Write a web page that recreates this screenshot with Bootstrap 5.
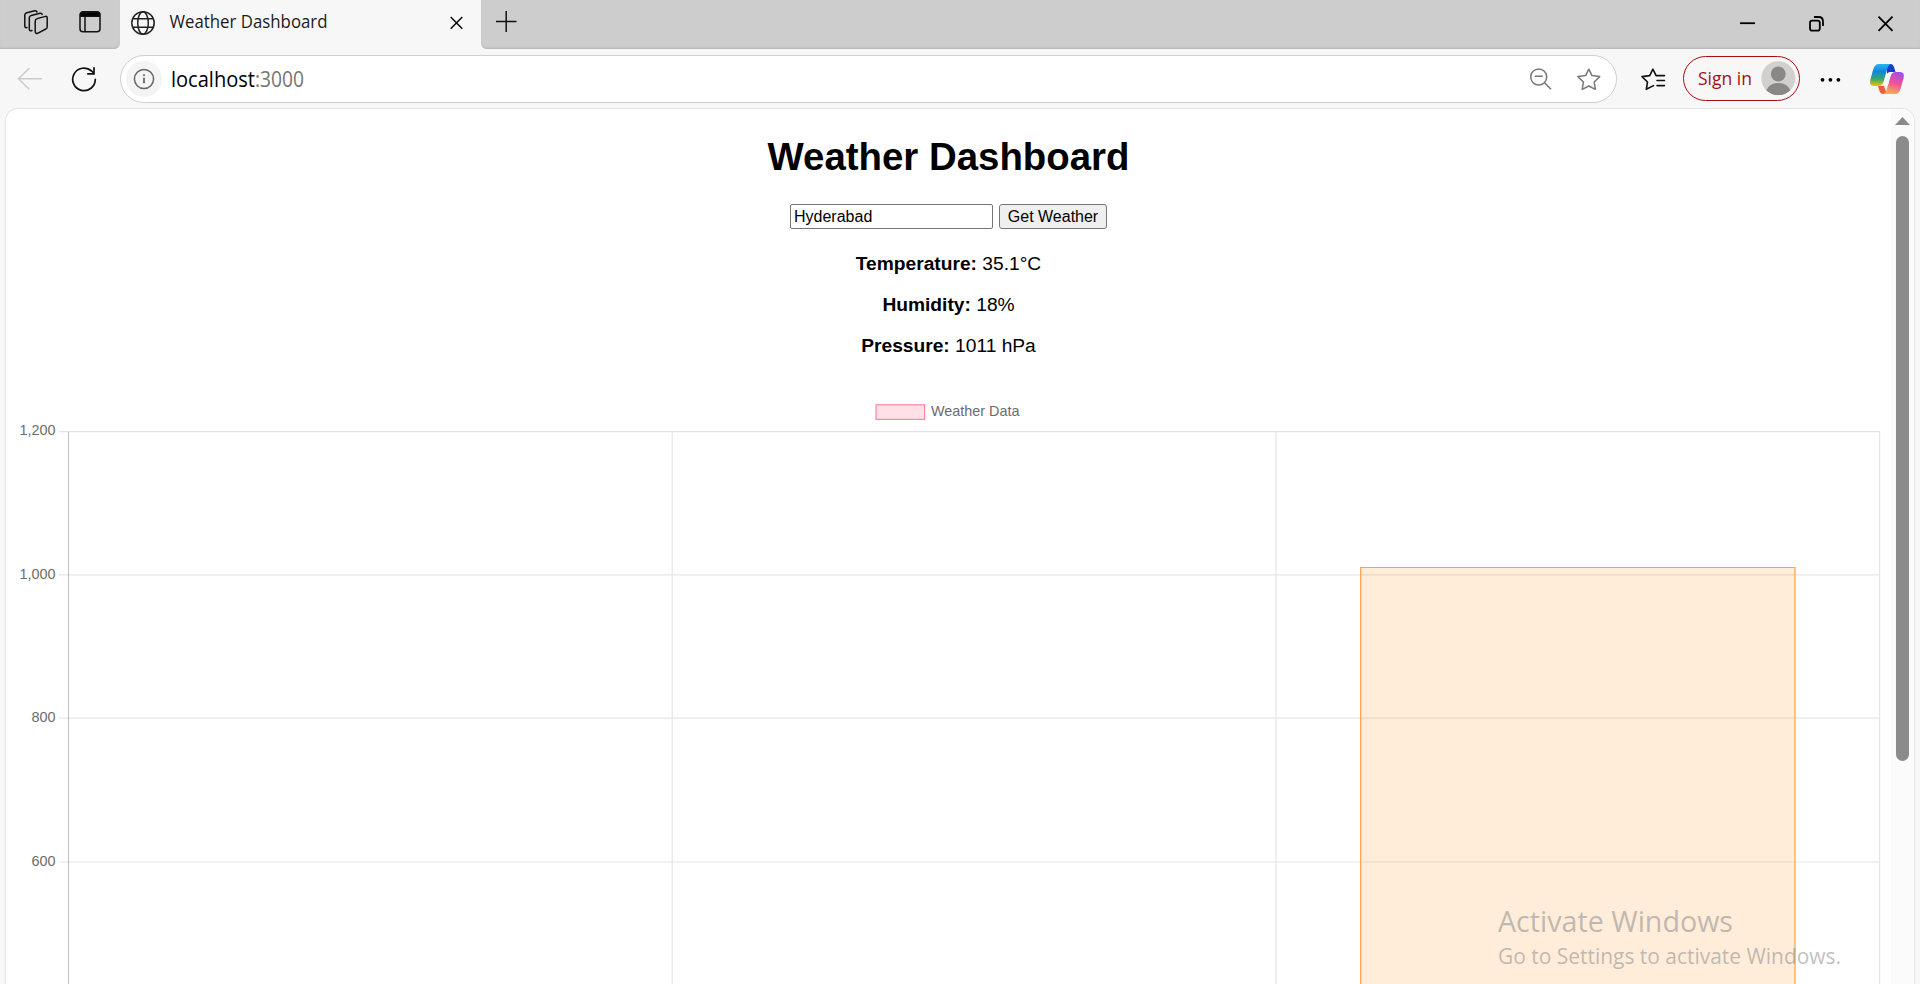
<!DOCTYPE html>
<html lang="en">
<head>
<meta charset="utf-8">
<title>Weather Dashboard</title>
<link href="https://cdn.jsdelivr.net/npm/bootstrap@5.3.0/dist/css/bootstrap.min.css" rel="stylesheet">
<style>
html,body{height:984px;overflow:hidden}
body{background:#f7f7f7;font-family:"Liberation Sans",Arial,sans-serif;color:#000}
svg{display:block;flex:none;overflow:visible}
.ui{font-family:"Open Sans","Noto Sans",sans-serif}
.tabstrip{height:49px;background:#f7f7f7}
.strip-l,.strip-r{background:#cdcdcd;box-shadow:inset 0 -2px 2px -1px #b3b3b3}
.strip-l{width:120px;padding:10px 0 0 24px;gap:31px;border-bottom-right-radius:6px}
.strip-r{border-bottom-left-radius:6px}
.tab-on{width:361px;padding:11px 18px 0 11px}
.toolbar{height:59px}
.pill{margin:6px 0 0 24px;width:1497px;height:48px;border:1.5px solid #cfcfcf;border-radius:24px;background:#fff}
.info-dot{width:36px;height:36px;border-radius:50%;background:#f4f4f4;margin-left:5px}
.signin{width:117px;height:45px;margin:7px 0 0 18px;border:1.5px solid #a80f14;border-radius:23px;padding:0 3px 0 14px}
.viewport{margin:0 5px;height:876px;border:1px solid #e4e4e4;border-bottom:0;border-radius:13px 13px 0 0;background:#fff;overflow:hidden}
.scrolltrack{width:23px;background:#fbfbfb;padding-top:8px}
.thumb{width:13px;height:625px;border-radius:7px;background:#8b8b8b;margin-top:11px}
.page{font-size:19.2px;line-height:22px}
.page h1{font-size:38.4px;font-weight:700;line-height:44px;margin:26px 0 25px}
.page p{margin:0 0 19.2px}
.city{width:203px;height:25px;font:16px "Liberation Sans",Arial,sans-serif;border:1px solid #767676;border-radius:2px;padding:0 3px;color:#000}
.go{width:108px;height:25px;font:16px "Liberation Sans",Arial,sans-serif;border:1px solid #767676;border-radius:3px;padding:0;background:#efefef;color:#000}
.form-line{gap:6px;margin-bottom:24px}
.chart{margin-top:-1px}
.watermark{right:79px;bottom:0}
</style>
<script src="https://cdn.jsdelivr.net/npm/bootstrap@5.3.0/dist/js/bootstrap.bundle.min.js"></script>
</head>
<body>
<header>
<div class="tabstrip d-flex">
  <div class="strip-l d-flex">
    <svg width="24" height="25" fill="none" stroke="#111" stroke-width="1.5" stroke-linejoin="round" stroke-linecap="round"><path d="M13.2 8.6 21.4 6.4Q23.2 6 23.2 7.8V16.8Q23.2 18.3 21.8 19L13.6 23.3Q11.2 24 11.2 21.6V11.2Q11.2 9.2 13.2 8.6Z"/><path d="M8 20.6Q5.3 21.3 5.3 19V7.8Q5.3 6 7.2 5.4L16 3.3Q17.8 3 18.2 4.4"/><path d="M3 17.6Q.8 18 .8 16V5Q.8 3.3 2.8 2.8L10.8.8Q12.6.4 13 2"/></svg>
    <svg width="21" height="23" fill="none" stroke="#111" stroke-width="1.5"><rect x="1" y="1.8" width="20" height="20" rx="3"/><path d="M1.7 4Q1.7 2.5 3.7 2.5H18.2Q20.3 2.5 20.3 4V6.3H1.7Z" fill="#000"/><path d="M6 7V21.5"/></svg>
  </div>
  <div class="tab-on d-flex">
    <svg width="24" height="24" fill="none" stroke="#222" stroke-width="1.5"><circle cx="12" cy="12" r="11.2"/><ellipse cx="12" cy="12" rx="5.3" ry="11.2"/><path d="M2 7.8H22M2 16.2H22"/></svg>
    <svg class="ui ms-3" width="280" height="24"><text x="-1.5" y="17.3" font-size="17.5" fill="#1b1b1b" textLength="158" lengthAdjust="spacingAndGlyphs">Weather Dashboard</text></svg>
    <svg width="13" height="24" stroke="#111" stroke-width="1.6" style="margin-left:-1px"><path d="M.7 6 12.3 17.8M12.3 6 .7 17.8"/></svg>
  </div>
  <div class="strip-r d-flex flex-grow-1 justify-content-between">
    <svg width="21" height="22" class="ms-3 mt-2" stroke="#111" stroke-width="1.5"><path d="M-1 13.5H19.5M9.2 3V24"/></svg>
    <svg width="153" height="16" style="margin:16px 27px 0 0" fill="none" stroke="#000" stroke-width="1.8"><path d="M0 7.2H15"/><rect x="70" y="4.6" width="9.8" height="10" rx="2.2"/><path d="M74 1H78.5Q83 1 83 5.5V10"/><path d="M138.5.6 152.5 14.8M152.5.6 138.5 14.8"/></svg>
  </div>
</div>
<div class="toolbar d-flex">
  <svg width="78" height="24" style="margin:18px 0 0 18px" fill="none" stroke-linecap="round"><path d="M23.5 11.8H.5M11 1.5.5 11.8 11 22" stroke="#cbcbcb" stroke-width="1.5"/><path d="M77.3 12.3A11.3 11.3 0 1 1 73.6 4L76 6.3M76 .8V6.8H69.8" stroke="#111" stroke-width="1.7"/></svg>
  <div class="pill d-flex align-items-center">
    <div class="info-dot d-flex align-items-center justify-content-center"><svg width="22" height="22" fill="none" stroke="#666" stroke-width="1.5"><circle cx="11" cy="11" r="9.6"/><path d="M11 9.8V15.3M11 6.3V8" stroke-width="1.8"/></svg></div>
    <svg class="ui" width="1368" height="24" style="margin-left:9px"><text x="0" y="20" font-size="21" fill="#000" textLength="84" lengthAdjust="spacingAndGlyphs">localhost</text><text x="84" y="20" font-size="21" fill="#757575" textLength="49" lengthAdjust="spacingAndGlyphs">:3000</text></svg>
    <svg width="71" height="23" style="margin-left:-9px" fill="none" stroke="#777" stroke-width="1.5" stroke-linejoin="round"><circle cx="8.7" cy="9" r="8"/><path d="M4.7 8.3H12.8M14.5 14.8 21 21.3"/><path d="M58.8 1.2 62 7.6 69.7 8.6 64.2 14 65.4 21.3 58.8 18 52.2 21.3 53.4 14 47.9 8.6 55.6 7.6Z"/></svg>
  </div>
  <svg width="24" height="23" style="margin:19px 0 0 24px" fill="none" stroke="#111" stroke-width="1.6" stroke-linejoin="round" stroke-linecap="round"><path d="M12.5 17.6 5.3 21.3 6.5 14 1 8.6 8.7 7.6 11.9 1.2 15.1 7.6H23.5M16 12.5H23.5M16 17.6H23.5"/></svg>
  <div class="signin d-flex align-items-center justify-content-between">
    <svg class="ui" width="54" height="24"><text x="0" y="17.8" font-size="18" fill="#a80f14" textLength="54" lengthAdjust="spacingAndGlyphs">Sign in</text></svg>
    <svg width="35" height="35"><defs><clipPath id="av"><circle cx="17.3" cy="17.3" r="17"/></clipPath></defs><circle cx="17.3" cy="17.3" r="17" fill="#d2d0ce"/><g clip-path="url(#av)" fill="#8a8886"><circle cx="17.3" cy="13" r="7.4"/><path d="M4 34Q6 22 17.3 22T30.6 34Z"/></g></svg>
  </div>
  <svg width="21" height="6" style="margin:28px 0 0 20px"><circle cx="2.5" cy="2.8" r="1.9"/><circle cx="10.4" cy="2.8" r="1.9"/><circle cx="18.4" cy="2.8" r="1.9"/></svg>
  <svg width="34" height="31" style="margin:15px 0 0 29px">
    <defs><linearGradient id="cb" x1="0" y1="0" x2="0" y2="1"><stop offset="0" stop-color="#28b4ef"/><stop offset=".35" stop-color="#1683dc"/><stop offset=".68" stop-color="#31a96c"/><stop offset="1" stop-color="#f0c500"/></linearGradient><linearGradient id="cp" x1=".7" y1="0" x2=".4" y2="1"><stop offset="0" stop-color="#a64ce8"/><stop offset=".5" stop-color="#ef5298"/><stop offset="1" stop-color="#ffad4e"/></linearGradient></defs>
    <path d="M17 0H21Q23 0 24 3L25.5 8H21Q18 8 17 11Z" fill="#153fc5"/>
    <path d="M8 22H14L17 30H13Q10.5 30 9.5 27Z" fill="#f45b3b"/>
    <path d="M9 0H21Q18.5.5 17.5 4L13.5 18Q12 22 8.5 22H4Q-1 22 .3 16L3.3 5Q5 0 9 0Z" fill="url(#cb)"/>
    <path d="M25.5 8H30Q35 8 33.6 14L30.5 25Q29 30 25 30H13Q15.5 29.5 16.5 26L20.5 12Q22 8 25.5 8Z" fill="url(#cp)"/>
    <path d="M18.5 8.6H23Q21.3 9.3 20.5 12L18 21.3H12.5Q14 20 14.7 17.5L16.4 11.5Q17 9 18.5 8.6Z" fill="#f7f7f7"/>
  </svg>
</div>
</header>
<main class="viewport d-flex">
  <div class="page flex-grow-1 text-center">
    <h1>Weather Dashboard</h1>
    <div class="form-line d-flex justify-content-center"><input class="city" value="Hyderabad" aria-label="City"><button class="go">Get Weather</button></div>
    <p><strong>Temperature:</strong> 35.1°C</p>
    <p><strong>Humidity:</strong> 18%</p>
    <p><strong>Pressure:</strong> 1011 hPa</p>
    <!-- bar chart: 143.5px per 200 units, three categories of 603.8px -->
    <svg class="chart" width="1885" height="608" viewBox="6 376 1885 608" font-size="14.4" fill="#6c6c6c">
      <rect x="876" y="404.8" width="48.6" height="14.6" fill="#ffe0e6" stroke="#ff6384" stroke-opacity=".75" stroke-width="1.2"/>
      <text x="931" y="415.9" textLength="88.5">Weather Data</text>
      <g stroke="#000" stroke-opacity=".1" stroke-width="1.2"><path d="M59 431.6H1880M59 574.8H1880M59 718.2H1880M59 862H1880M672.2 432V984M1276 432V984M1879.6 432V984"/><path d="M68.5 432V984" stroke-opacity=".22"/></g>
      <g text-anchor="end"><text x="55.5" y="435">1,200</text><text x="55.5" y="579">1,000</text><text x="55.5" y="722.4">800</text><text x="55.5" y="866">600</text></g>
      <path d="M1360.7 990V567.5H1795V990" fill="#ff9f40" fill-opacity=".2" stroke="#ff9f40" stroke-width="1.2"/>
    </svg>
  </div>
  <div class="scrolltrack d-flex flex-column align-items-center">
    <svg width="15" height="8"><path d="M0 8 7.5 0 15 8Z" fill="#8b8b8b"/></svg>
    <div class="thumb"></div>
  </div>
</main>
<div class="watermark position-absolute ui">
  <svg width="343" height="84" fill="#8f8f8f" fill-opacity=".57"><text x="0" y="32" font-size="29" textLength="235" lengthAdjust="spacingAndGlyphs">Activate Windows</text><text x="0" y="64" font-size="21.5" textLength="343" lengthAdjust="spacingAndGlyphs">Go to Settings to activate Windows.</text></svg>
</div>
</body>
</html>
